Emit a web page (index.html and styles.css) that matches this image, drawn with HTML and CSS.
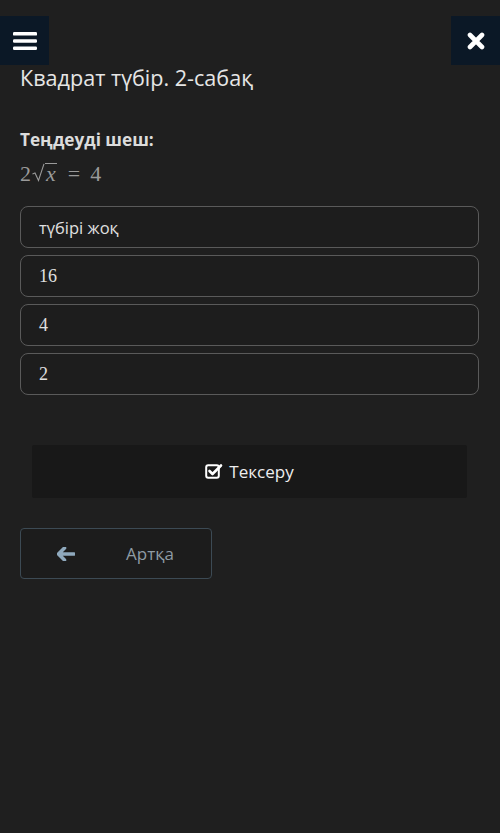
FILE: index.html
```html
<!DOCTYPE html>
<html>
<head>
<meta charset="utf-8">
<link rel="stylesheet" href="styles.css">
</head>
<body>
<div class="page">
  <div class="topbar">
    <div class="iconbtn">
      <svg width="24" height="20" viewBox="0 0 24 20"><rect x="0" y="1" width="24" height="3.6" rx="1.2" fill="#fff"/><rect x="0" y="8.2" width="24" height="3.6" rx="1.2" fill="#fff"/><rect x="0" y="15.4" width="24" height="3.6" rx="1.2" fill="#fff"/></svg>
    </div>
    <div class="iconbtn">
      <svg width="18" height="18" viewBox="0 0 18 18"><path d="M3 3 L15 15 M15 3 L3 15" stroke="#fff" stroke-width="4.6" stroke-linecap="round"/></svg>
    </div>
  </div>
  <h1 class="title">Квадрат түбір. 2-сабақ</h1>
  <div class="question">Теңдеуді шеш:</div>
  <div class="math"><span class="num">2</span><span class="sqrt"><svg width="13" height="20" viewBox="0 0 13 20"><path d="M0.5 11 L3 10 L6.5 17.5 L12 0.8" fill="none" stroke="#9a9a9a" stroke-width="1.1"/></svg><span class="rad"><i>x</i></span></span><span class="op">=</span><span class="num">4</span></div>
  <div class="options">
    <div class="option sans"><span>түбірі жоқ</span></div>
    <div class="option serif"><span>16</span></div>
    <div class="option serif"><span>4</span></div>
    <div class="option serif"><span>2</span></div>
  </div>
  <div class="checkwrap">
    <div class="check">
      <svg width="18" height="16" viewBox="0 0 18 16"><rect x="1.2" y="2.2" width="12.6" height="12.6" rx="2" fill="none" stroke="#fff" stroke-width="2"/><path d="M4.5 8 L7.5 11 L16 2.5" fill="none" stroke="#fff" stroke-width="2.6" stroke-linecap="round" stroke-linejoin="round"/></svg>
      <span>Тексеру</span>
    </div>
  </div>
  <div class="back">
    <svg width="18" height="14" viewBox="0 0 18 14"><path d="M7.5 1 L1.5 7 L7.5 13 M2 7 L17 7" fill="none" stroke="#8fa9bd" stroke-width="3.6" stroke-linecap="round" stroke-linejoin="round"/></svg>
    <span>Артқа</span>
  </div>
</div>
</body>
</html>
```
FILE: styles.css
```css
html, body {
  margin: 0;
  padding: 0;
  background: #1f1f1f;
}
body {
  width: 500px;
  height: 833px;
  overflow: hidden;
  font-family: "Open Sans", "Noto Sans", sans-serif;
  color: #e2e2e2;
}
.page {
  padding-top: 16px;
}
.topbar {
  display: flex;
  justify-content: space-between;
  height: 49px;
}
.iconbtn {
  width: 49px;
  height: 49px;
  background: #0b1826;
  display: flex;
  align-items: center;
  justify-content: center;
}
.title {
  margin: -1px 0 0 20px;
  font-size: 21.6px;
  font-weight: 400;
  line-height: 28px;
  color: #e6e6e6;
}
.question {
  margin: 36px 0 0 20px;
  font-size: 17.2px;
  font-weight: 700;
  line-height: 24px;
  color: #dcdcdc;
}
.math {
  margin: 8px 0 0 20px;
  height: 26px;
  display: flex;
  align-items: flex-end;
  font-size: 19px;
  color: #9a9a9a;
  line-height: 24px;
}
.math .num { font-family: "Liberation Serif", serif; font-size: 22px; }
.sqrt {
  display: flex;
  align-items: flex-end;
  margin-left: 1px;
}
.sqrt svg { margin-bottom: 3px; }
.rad {
  border-top: 1.1px solid #9a9a9a;
  margin-bottom: 2px;
  padding: 0 1px;
  line-height: 20px;
  font-family: "Liberation Serif", serif;
  font-size: 22px;
}
.rad i { font-style: italic; }
.op { margin: 0 10px 0 11px; font-family: "Liberation Serif", serif; font-size: 22px; }
.options {
  margin: 20px 21px 0 20px;
  display: flex;
  flex-direction: column;
  gap: 7px;
}
.option {
  box-sizing: border-box;
  height: 42px;
  border: 1.5px solid #5a5a5a;
  border-radius: 8px;
  background: #1d1d1d;
  display: flex;
  align-items: center;
  padding-left: 18px;
  color: #e0e0e0;
}
.option.sans { font-size: 16.5px; }
.option.serif { font-family: "Liberation Serif", "DejaVu Serif", serif; font-size: 18px; }
.checkwrap {
  margin: 50px 33px 0 32px;
}
.check {
  height: 53px;
  background: #181818;
  border-radius: 2px;
  display: flex;
  align-items: center;
  justify-content: center;
  gap: 6px;
  font-size: 17px;
  color: #eeeeee;
}
.check svg { margin-top: -2px; }
.back {
  box-sizing: border-box;
  margin: 30px 0 0 20px;
  width: 192px;
  height: 51px;
  border: 1.5px solid #3c4a54;
  border-radius: 4px;
  background: #1c1c1c;
  display: flex;
  align-items: center;
  font-size: 17px;
  color: #8e9ba5;
}
.back svg { margin-left: 36px; }
.back span { margin-left: 51px; }
```
